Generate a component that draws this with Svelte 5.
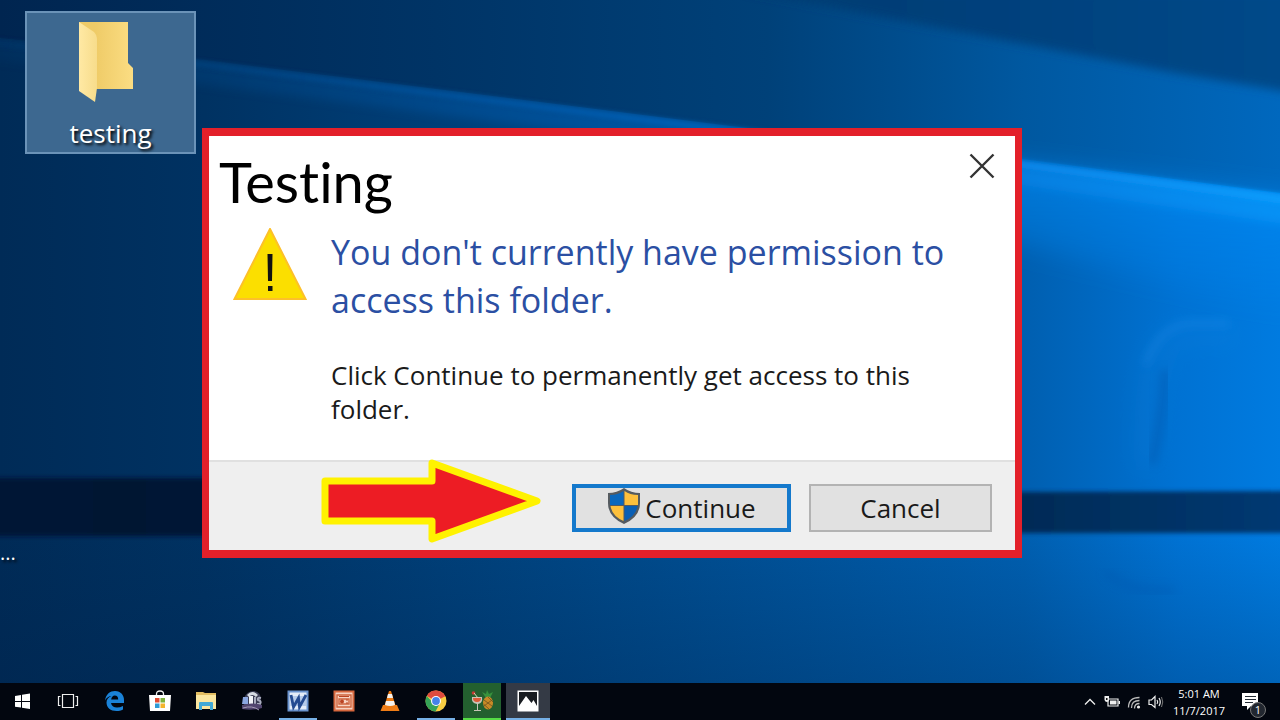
<script>
    const apps = [
        { id: 'start', label: 'Start' },
        { id: 'taskview', label: 'Task View' },
        { id: 'edge', label: 'Microsoft Edge' },
        { id: 'store', label: 'Store' },
        { id: 'explorer', label: 'File Explorer' },
        { id: 'dvd', label: 'Disc tool' },
        { id: 'word', label: 'Word', state: 'running' },
        { id: 'powerpoint', label: 'PowerPoint' },
        { id: 'vlc', label: 'VLC' },
        { id: 'chrome', label: 'Chrome', state: 'running' },
        { id: 'game', label: 'Game', state: 'alert' },
        { id: 'photos', label: 'Photos', state: 'active' },
    ];

    let open = $state(true);

    function close() {
        open = false;
    }
</script>

<div class="desktop">
    <svg class="wallpaper" viewBox="0 0 1280 720" preserveAspectRatio="none" aria-hidden="true">
        <defs>
            <linearGradient id="base" x1="0" x2="1" y1="0" y2="0">
                <stop offset="0" stop-color="#002b57" />
                <stop offset=".16" stop-color="#003262" />
                <stop offset=".5" stop-color="#004a8b" />
                <stop offset=".8" stop-color="#005fb0" />
                <stop offset=".92" stop-color="#0072d3" />
                <stop offset="1" stop-color="#007be0" />
            </linearGradient>
            <linearGradient id="sky" x1="0" x2="1" y1="0" y2="0">
                <stop offset="0" stop-color="#002550" />
                <stop offset=".3" stop-color="#003263" />
                <stop offset=".6" stop-color="#004179" />
                <stop offset=".8" stop-color="#0058a0" />
                <stop offset="1" stop-color="#0068be" />
            </linearGradient>
            <linearGradient id="corner" x1="0" x2="1" y1="0" y2="0">
                <stop offset="0" stop-color="#003a70" />
                <stop offset="1" stop-color="#00498a" />
            </linearGradient>
            <linearGradient id="beam" x1="0" x2="1" y1="0" y2="0">
                <stop offset="0" stop-color="#00427c" stop-opacity=".3" />
                <stop offset=".35" stop-color="#0058a8" stop-opacity=".8" />
                <stop offset=".6" stop-color="#0068c4" />
                <stop offset=".8" stop-color="#0c8cf0" />
                <stop offset="1" stop-color="#08a0ff" />
            </linearGradient>
            <linearGradient id="glow" x1="0" x2="0" y1="0" y2="1">
                <stop offset="0" stop-color="#0090ff" stop-opacity=".6" />
                <stop offset="1" stop-color="#0090ff" stop-opacity="0" />
            </linearGradient>
            <linearGradient id="bar" x1="0" x2="1" y1="0" y2="0">
                <stop offset="0" stop-color="#001a36" />
                <stop offset=".12" stop-color="#001633" />
                <stop offset=".8" stop-color="#002c58" />
                <stop offset="1" stop-color="#003a75" />
            </linearGradient>
            <linearGradient id="floor" x1="0" x2="0" y1="0" y2="1">
                <stop offset="0" stop-color="#001e44" stop-opacity="0" />
                <stop offset="1" stop-color="#001e44" stop-opacity=".3" />
            </linearGradient>
            <filter id="soft2" x="-10%" y="-20%" width="120%" height="140%"><feGaussianBlur stdDeviation="2" /></filter>
            <filter id="soft5" x="-20%" y="-20%" width="140%" height="140%"><feGaussianBlur stdDeviation="5" /></filter>
            <filter id="soft12" x="-20%" y="-40%" width="140%" height="180%"><feGaussianBlur stdDeviation="12" /></filter>
        </defs>
        <rect width="1280" height="720" fill="url(#base)" />
        <path d="M0 0H1280V193L1022 159L730 126L205 60L0 38Z" fill="url(#sky)" />
        <path d="M740 -10H1300V94L1180 74Z" fill="url(#corner)" filter="url(#soft5)" />
        <path d="M900 150L1300 196V320L1000 240Z" fill="url(#glow)" filter="url(#soft12)" />
        <path d="M-10 42L205 66L730 131L1022 165L1290 199V225L1022 185L730 151L205 85L-10 60Z" fill="url(#beam)" opacity=".5" filter="url(#soft5)" />
        <path d="M-10 38L205 61L730 127L1022 161L1290 195V205L1022 168L730 134L205 68L-10 46Z" fill="url(#beam)" opacity=".8" filter="url(#soft2)" />
        <path d="M1135 470C1133 390 1138 325 1182 321H1240V350H1180C1164 380 1166 430 1158 470Z" fill="#1080dd" opacity=".25" filter="url(#soft12)" />
        <path d="M1145 365Q1160 325 1190 323H1230" fill="none" stroke="#2090ee" stroke-width="6" opacity=".35" filter="url(#soft5)" />
        <path d="M1152 464Q1164 410 1165 370" fill="none" stroke="#0057ad" stroke-width="9" opacity=".5" filter="url(#soft5)" />
        <rect y="534" width="1280" height="186" fill="url(#floor)" />
        <path d="M1105 572Q1130 594 1174 590" fill="none" stroke="#0055ae" stroke-width="6" opacity=".4" filter="url(#soft5)" />
        <path d="M-30 478H205L1020 492L1310 491V533H1020L205 536H-30Z" fill="url(#bar)" filter="url(#soft2)" />
    </svg>

    <main>
        <button class="shortcut">
            <svg width="66" height="82" viewBox="0 0 66 82" aria-hidden="true">
                <defs>
                    <linearGradient id="folderBack" x1="0" x2="1">
                        <stop offset=".3" stop-color="#efcb67" />
                        <stop offset="1" stop-color="#fbdd83" />
                    </linearGradient>
                    <linearGradient id="folderFront" x1="0" x2="1">
                        <stop offset="0" stop-color="#ffe9a4" />
                        <stop offset="1" stop-color="#f7dc8b" />
                    </linearGradient>
                </defs>
                <path d="M1 0H50V41L55 46V67H1Z" fill="url(#folderBack)" />
                <path d="M1 0L16 10Q19 13 19 18V66L17 80L1 69Z" fill="url(#folderFront)" />
            </svg>
            <span>testing</span>
        </button>
        <span class="clipped-label">...</span>

        {#if open}
            <div class="dialog" role="dialog" aria-labelledby="dialog-title">
                <header>
                    <h1 id="dialog-title">Testing</h1>
                    <button class="close" aria-label="Close" onclick={close}>
                        <svg width="26" height="26" viewBox="0 0 26 26">
                            <path d="M1.500 1.500L24.500 24.500M24.500 1.500L1.500 24.500" stroke="#333" stroke-width="2.400" />
                        </svg>
                    </button>
                </header>
                <div class="message">
                    <svg width="74" height="74" viewBox="0 0 74 74" aria-hidden="true">
                        <path d="M37 1L72.500 71H1.500Z" fill="#fbdf00" stroke="#fdc029" stroke-width="2" />
                        <path d="M34.500 26H39.500L39 53H35ZM35 58H39.500V63H35Z" fill="#111" />
                    </svg>
                    <div>
                        <h2>You don't currently have permission to access this folder.</h2>
                        <p>Click Continue to permanently get access to this folder.</p>
                    </div>
                </div>
                <footer>
                    <svg class="arrow" width="222" height="88" viewBox="0 0 222 88" aria-hidden="true">
                        <path d="M4 23H111V5L216 43L111 81V63H4Z" fill="#ed1c24" stroke="#fff200" stroke-width="7" stroke-linejoin="round" />
                    </svg>
                    <button class="action primary" onclick={close}>
                        <svg width="34" height="40" viewBox="0 0 34 40" aria-hidden="true">
                            <path d="M17 0Q10 5 1 5V15Q1 29 17 36Q33 29 33 15V5Q24 5 17 0Z" fill="#555b60" />
                            <path d="M16.500 3Q11 7 3 7V17H16.500Z" fill="#0a68bd" />
                            <path d="M17.500 3Q23 7 31 7V17H17.500Z" fill="#fdc03c" />
                            <path d="M3.500 18H16.500V33Q5 28 3.500 18Z" fill="#fdc03c" />
                            <path d="M30.500 18H17.500V33Q29 28 30.500 18Z" fill="#0a5fb4" />
                        </svg>
                        Continue
                    </button>
                    <button class="action" onclick={close}>Cancel</button>
                </footer>
            </div>
        {/if}
    </main>

    <nav class="taskbar" aria-label="Taskbar">
        {#each apps as app}
            <button class="app {app.state ?? ''}" aria-label={app.label}>
                <svg width="24" height="24" viewBox="0 0 24 24">
                    {#if app.id === 'start'}
                        <path d="M5 7L11 6V12H5ZM12 5.800L20 4.500V12H12ZM5 13H11V18.500L5 17.700ZM12 13H20V20L12 18.700Z" fill="#fff" />
                    {:else if app.id === 'taskview'}
                        <path d="M6.500 5.500H17.500V18.500H6.500ZM4.500 7.500H2.500V16.500H4.500M19.500 7.500H21.500V16.500H19.500" fill="none" stroke="#eee" stroke-width="1.200" />
                    {:else if app.id === 'edge'}
                        <path d="M3 11.500C4 5 8 2 13 2C19 2 22 6.500 22 11V14H9C9.500 17 12 18.500 15 18.500C17 18.500 19 18 21 17V20.500C19 21.700 17 22 14.500 22C8.500 22 4.500 18.500 4.500 13.500C4.500 10.500 6.500 8 9.500 7C7 7 4.500 8.500 3 11.500ZM9.200 10.500H16.200C16.200 8 15 6.500 12.800 6.500C10.800 6.500 9.400 8.200 9.200 10.500Z" fill="#1a82d8" />
                    {:else if app.id === 'store'}
                        <path d="M8.500 7V5Q8.500 2 12 2Q15.500 2 15.500 5V7" fill="none" stroke="#eee" stroke-width="1.300" />
                        <path d="M1 6H23L22 22H2Z" fill="#fff" />
                        <path d="M7 9H11.500V13.500H7Z" fill="#e24b32" />
                        <path d="M12.500 9H17V13.500H12.500Z" fill="#7db23b" />
                        <path d="M7 14.500H11.500V19H7Z" fill="#2e9bd6" />
                        <path d="M12.500 14.500H17V19H12.500Z" fill="#f3b52e" />
                    {:else if app.id === 'explorer'}
                        <path d="M2 3H9L11 4H22V20H2Z" fill="#e2bd62" />
                        <path d="M2 6H22V20H2Z" fill="#fae6a0" />
                        <path d="M5 21V14Q5 13 6 13H18Q19 13 19 14V21H16V17H8V21Z" fill="#41a9d6" />
                    {:else if app.id === 'dvd'}
                        <path d="M4 10Q6 2 14 2Q21 3 21 11V16H4Z" fill="#3b3d55" />
                        <path d="M7 6Q12 0 18 6L16 8Q12 4 9 8Z" fill="#d6dae2" />
                        <path d="M3 8H8V15H2Z" fill="#8ba6e0" />
                        <path d="M9 7H13V15H9Z" fill="#f1f3f8" />
                        <path d="M15 8V15M21 9Q17 8 18 11Q22 12 20 15H17" fill="none" stroke="#a9acbf" stroke-width="2" />
                        <path d="M2 16Q12 13 22 16V19Q12 22 2 20Z" fill="#51456f" />
                        <path d="M3 19Q12 16 19 21" fill="none" stroke="#a69cb8" />
                    {:else if app.id === 'word'}
                        <rect x="2.500" y="2.500" width="19" height="19" fill="#e4ecf8" stroke="#6b94cf" stroke-width="2" />
                        <path d="M4.500 7H20V17H4.500Z" fill="#b6cbea" />
                        <path d="M5 6L7.500 18L12.500 9L13.500 18L20 6" fill="none" stroke="#254b91" stroke-width="2.800" />
                    {:else if app.id === 'powerpoint'}
                        <rect x="2.500" y="2.500" width="19" height="19" fill="#f7d2c2" stroke="#d5663d" stroke-width="2" />
                        <path d="M5 6H19V18H5ZM7 10H17V15H7Z" fill="none" stroke="#ce643e" stroke-width="1.400" />
                        <circle cx="10" cy="12.500" r="2" fill="#ba4423" />
                        <path d="M14 11H16M14 14H16M7 7.500H17" stroke="#ba4423" />
                    {:else if app.id === 'vlc'}
                        <path d="M5 16H19L21.500 22H2.500Z" fill="#ee7c16" />
                        <path d="M11 2H13L18 18Q12 21 6 18Z" fill="#ed7a12" />
                        <path d="M10 5H14L15 9H9ZM8 12H16L17 16Q12 18 7 16Z" fill="#f4f1ed" />
                    {:else if app.id === 'chrome'}
                        <circle cx="12" cy="12" r="10.500" fill="#f8ce43" />
                        <path d="M12 12L2.800 6.900A10.500 10.500 0 0 1 21.300 7.200Z" fill="#df4b3e" />
                        <path d="M12 12H7.500L2.800 6.900A10.500 10.500 0 0 0 11.500 22.500L15.500 15Z" fill="#35a356" />
                        <path d="M12 7H21.200L20.500 6H12Z" fill="#df4b3e" />
                        <circle cx="12" cy="12" r="5" fill="#fff" />
                        <circle cx="12" cy="12" r="3.900" fill="#4582e8" />
                    {:else if app.id === 'game'}
                        <path d="M16 9L12 3L16 5L17 1L19 5L23 3L20 9Z" fill="#37933d" />
                        <ellipse cx="18" cy="14" rx="5" ry="6.500" fill="#c88a27" />
                        <path d="M14 11L22 17M13.500 15L19 20M22 11L14 17M18 8L23 13" stroke="#70501f" stroke-width=".8" />
                        <path d="M2 8H12Q13 14 8 15V21H11V22H4V21H7V15Q1 14 2 8Z" fill="#c9c4b7" />
                        <path d="M3 9H11Q11 13 7 13Q3 13 3 9Z" fill="#dc5a38" />
                        <circle cx="3.500" cy="4" r="1.800" fill="#c43832" />
                        <path d="M4 4L8 9" stroke="#ded7b5" />
                    {:else}
                        <rect x="1.500" y="1.500" width="21" height="21" fill="#fff" />
                        <path d="M3 3H21V17L17.500 11L15.500 14L10 7L3 17Z" fill="#191c21" />
                    {/if}
                </svg>
            </button>
        {/each}

        <div class="tray">
            <button aria-label="Show hidden icons">
                <svg width="16" height="16" viewBox="0 0 16 16"><path d="M3 10.500L8 5.500L13 10.500" fill="none" stroke="#eee" stroke-width="1.300" /></svg>
            </button>
            <button aria-label="Battery">
                <svg width="16" height="16" viewBox="0 0 16 16">
                    <path d="M4 5H14V12H4Z" fill="none" stroke="#eee" stroke-width="1.200" />
                    <path d="M6 6.500H12.500V10.500H6ZM14.500 7H16V10H14.500ZM.5 2V6Q1 8 3 8Q5 8 5 6V2Z" fill="#eee" />
                    <path d="M2 4V6H3.500V4Z" fill="#111" />
                </svg>
            </button>
            <button aria-label="Network">
                <svg width="16" height="16" viewBox="0 0 16 16">
                    <path d="M2.500 13.500Q2.500 3.500 13.500 3.500M5.500 14Q5.500 6.500 13.500 6.500M8.500 14.500Q8.500 9.500 13.500 9.500" fill="none" stroke="#bbb" stroke-width="1.300" />
                    <circle cx="12.500" cy="13" r="1.600" fill="#eee" />
                </svg>
            </button>
            <button aria-label="Volume">
                <svg width="16" height="16" viewBox="0 0 16 16">
                    <path d="M1 6H3.500L7 2.500V13.500L3.500 10.500H1Z" fill="none" stroke="#eee" stroke-width="1.200" />
                    <path d="M9 6Q10.500 8 9 10M11 4Q13.500 8 11 12" fill="none" stroke="#eee" stroke-width="1.200" />
                    <path d="M13.500 3Q16 8 13.500 13" fill="none" stroke="#777" />
                </svg>
            </button>
            <time datetime="2017-11-07T05:01">5:01 AM<br />11/7/2017</time>
            <button class="notifications" aria-label="Notifications">
                <svg width="26" height="26" viewBox="0 0 26 26" aria-hidden="true">
                    <path d="M2 4H18V17H11L7 21V17H2Z" fill="#fff" />
                    <path d="M5 7.500H16M5 10.500H16M5 13.500H13" stroke="#222b35" />
                </svg>
                <span>1</span>
            </button>
        </div>
    </nav>
</div>

<style>
    :global(body) {
        margin: 0;
    }

    .desktop {
        position: relative;
        isolation: isolate;
        display: flex;
        flex-direction: column;
        min-height: 100vh;
        overflow: hidden;
        font-family: "Open Sans", "Noto Sans", sans-serif;
    }

    .wallpaper {
        position: absolute;
        inset: 0;
        z-index: -1;
        width: 100%;
        height: 100%;
    }

    button {
        margin: 0;
        padding: 0;
        border: 0;
        background: none;
        color: inherit;
        font: inherit;
    }

    svg {
        display: block;
        flex: none;
    }

    main {
        flex: 1;
        padding: 128px 258px 0 202px;
    }

    /* desktop icons sit freely on the wallpaper */
    .shortcut {
        position: absolute;
        top: 11px;
        left: 25px;
        display: flex;
        flex-direction: column;
        align-items: center;
        gap: 12px;
        width: 171px;
        height: 143px;
        padding-top: 9px;
        box-sizing: border-box;
        border: 2px solid #6b93b8;
        background: #3d6890;
        color: #fff;
        font-size: 26px;
        line-height: 34px;
        text-shadow: 2px 2px 3px #000;
    }

    .clipped-label {
        position: absolute;
        top: 536px;
        left: 0;
        color: #fff;
        font-size: 20px;
        line-height: 34px;
        text-shadow: 2px 2px 3px #000;
    }

    .dialog {
        border: 8px solid #e3202a;
        border-width: 8px 7px;
        background: #fff;
        color: #1a1a1a;
    }

    header {
        display: flex;
        justify-content: space-between;
        padding: 0 17px 0 10px;
    }

    h1 {
        margin: 0;
        color: #000;
        font: 400 56px/92px Lato, sans-serif;
        font-variant-ligatures: none;
    }

    .close {
        display: grid;
        place-items: center;
        width: 32px;
        height: 32px;
        margin-top: 14px;
    }

    .message {
        display: flex;
        gap: 24px;
        padding: 0 48px 34px 24px;
    }

    h2 {
        margin: 0 0 34px;
        color: #2b4fa3;
        font-size: 34px;
        font-weight: 400;
        line-height: 48px;
    }

    p {
        margin: 0;
        font-size: 26px;
        line-height: 34px;
    }

    footer {
        position: relative;
        display: flex;
        justify-content: flex-end;
        gap: 18px;
        padding: 22px 23px 18px;
        border-top: 2px solid #e0e0e0;
        background: #efefef;
    }

    .arrow {
        position: absolute;
        top: -4px;
        right: 472px;
    }

    .action {
        display: flex;
        align-items: center;
        justify-content: center;
        gap: 4px;
        width: 183px;
        height: 48px;
        box-sizing: border-box;
        border: 2px solid #b3b3b3;
        background: #e1e1e1;
        font-size: 26px;
    }

    .primary {
        width: 219px;
        border: 4px solid #1479cc;
    }

    .taskbar {
        display: flex;
        gap: 2px;
        height: 37px;
        background: #02060f;
        color: #fff;
    }

    .app {
        display: grid;
        place-items: center;
        width: 44px;
        border-bottom: 2px solid transparent;
    }

    .running {
        width: 38px;
        margin: 0 3px;
        border-color: #76b0e6;
    }

    .alert {
        width: 38px;
        margin: 0 3px;
        border-color: #55dd45;
        background: #23602f;
    }

    .active {
        border-color: #76b0e6;
        background: #343a45;
    }

    .tray {
        display: flex;
        align-items: center;
        gap: 6px;
        margin-left: auto;
        padding-right: 14px;
    }

    time {
        width: 58px;
        font-size: 11px;
        line-height: 17px;
        text-align: center;
    }

    .notifications {
        position: relative;
        margin-left: 6px;
    }

    .notifications span {
        position: absolute;
        right: 0;
        bottom: -3px;
        width: 14px;
        border: 1px solid #777;
        border-radius: 50%;
        background: #222730;
        font-size: 11px;
        line-height: 14px;
    }
</style>
